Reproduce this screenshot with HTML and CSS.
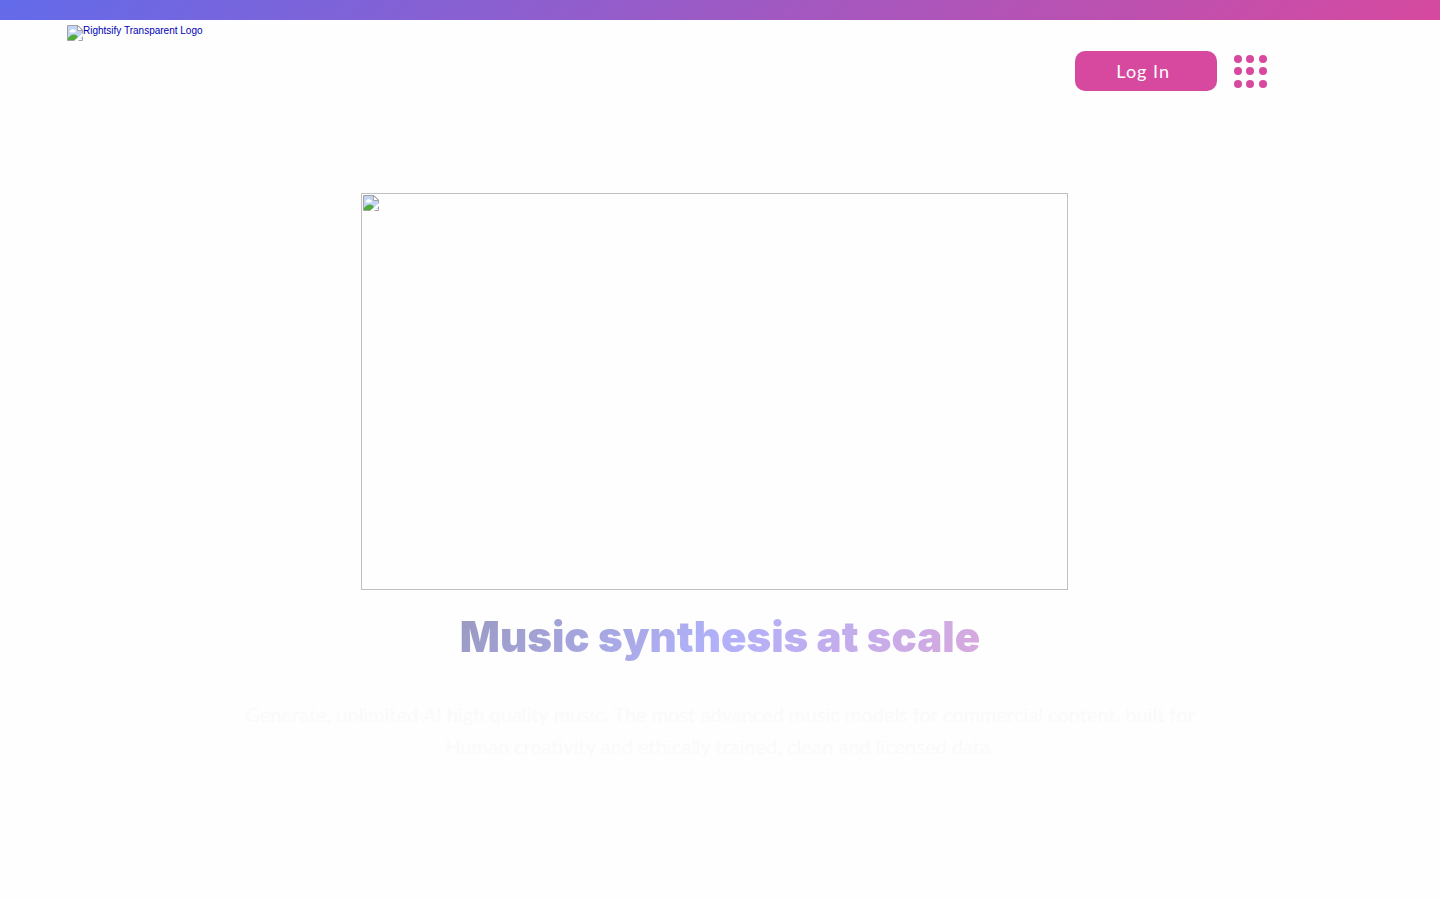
FILE: index.html
```html
<!DOCTYPE html>
<html lang="en">

<head>
    <meta charset="UTF-8">
    <meta name="viewport" content="width=device-width, initial-scale=1.0">
    <title>Rightsify</title>
    <link rel="stylesheet" href="styles.css">
</head>

<body>
    <!-- Shared missing image glyph -->
    <svg class="sprite" aria-hidden="true">
        <symbol id="missing" viewBox="0 0 16 16">
            <path d="M0.5 15.5V0.5H11L15.5 5V15.5Z" fill="#fff" stroke="#a3a3a3" />
            <path d="M1 1H10.5V5.5H15V14H1Z" fill="#c2d4f5" />
            <path d="M3 7.5a1.5 1.5 0 0 1 1-2.5a2 2 0 0 1 3.5 0A1.3 1.3 0 0 1 8 7.5Z" fill="#fff" />
            <path d="M1 15V13C3 10.5 5 9.5 7 9.5S10 10.5 11 12L8 15Z" fill="#51ab3a" />
            <path d="M7 16L16 8V11L11 16Z" fill="#fff" />
            <path d="M10.5 0.5V5.5H15.5Z" fill="#fff" stroke="#a3a3a3" />
        </symbol>
    </svg>

    <div class="top-bar"></div>

    <header class="header">
        <a class="logo" href="#">
            <svg class="missing-icon" aria-hidden="true"><use href="#missing" /></svg>
            <span>Rightsify Transparent Logo</span>
        </a>
        <div class="actions">
            <button class="login" type="button">Log In</button>
            <button class="menu" type="button" aria-label="Menu">
                <svg width="33" height="33" viewBox="0 0 33 33" fill="#d6499f">
                    <circle cx="4" cy="4" r="4" />
                    <circle cx="16" cy="4" r="4" />
                    <circle cx="29" cy="4" r="4" />
                    <circle cx="4" cy="16" r="4" />
                    <circle cx="16" cy="16" r="4" />
                    <circle cx="29" cy="16" r="4" />
                    <circle cx="4" cy="29" r="4" />
                    <circle cx="16" cy="29" r="4" />
                    <circle cx="29" cy="29" r="4" />
                </svg>
            </button>
        </div>
    </header>

    <main class="hero">
        <div class="hero-image">
            <svg class="missing-icon" aria-hidden="true"><use href="#missing" /></svg>
        </div>
        <h1>Music synthesis at scale</h1>
        <p>Generate, unlimited AI high quality music. The most advanced music models for commercial content, built for Human creativity and ethically trained, clean and licensed data.</p>
    </main>
</body>

</html>
```
FILE: styles.css
```css
body {
    margin: 0;
    background-color: #fefefe;
    font-family: "Liberation Sans", Arial, sans-serif;
}

.sprite {
    position: absolute;
    width: 0;
    height: 0;
}

.missing-icon {
    display: block;
    flex: none;
    width: 16px;
    height: 16px;
}

.top-bar {
    height: 20px;
    background: linear-gradient(135deg, #636bea, #d6499f);
}

.header {
    display: flex;
    justify-content: space-between;
    padding: 5px 12% 0 67px;
}

.logo {
    display: flex;
    align-items: flex-start;
    color: #0000b4;
    font-size: 10px;
    line-height: 12px;
    text-decoration: none;
}

.actions {
    display: flex;
    align-items: center;
    gap: 17px;
    margin-top: 26px;
}

.login {
    width: 142px;
    height: 40px;
    padding: 0 6px 0 0;
    border: none;
    border-radius: 10px;
    background-color: #d6499f;
    color: #fff;
    font-family: Lato, sans-serif;
    font-size: 18px;
    letter-spacing: 1px;
    cursor: pointer;
}

.menu {
    padding: 0;
    border: none;
    background: none;
    cursor: pointer;
}

.menu svg {
    display: block;
}

.hero {
    display: flex;
    flex-direction: column;
    align-items: center;
    max-width: 980px;
    margin: 102px auto 0;
    text-align: center;
}

.hero-image {
    box-sizing: border-box;
    width: 100%;
    max-width: 707px;
    aspect-ratio: 707 / 397;
    margin-right: 12px;
    padding: 1px;
    border: 1px solid #c0c0c0;
}

.hero h1 {
    margin: 19px 0 0;
    font-family: Inter, sans-serif;
    font-size: 42px;
    font-weight: 900;
    line-height: 56px;
    background: linear-gradient(135deg, #9999c0, #b1b1fa 50%, #d9a8dc);
    -webkit-background-clip: text;
    background-clip: text;
    color: transparent;
}

.hero p {
    margin: 33px 0 0;
    color: #fafafa;
    font-family: Lato, sans-serif;
    font-size: 20px;
    line-height: 32px;
}
```
